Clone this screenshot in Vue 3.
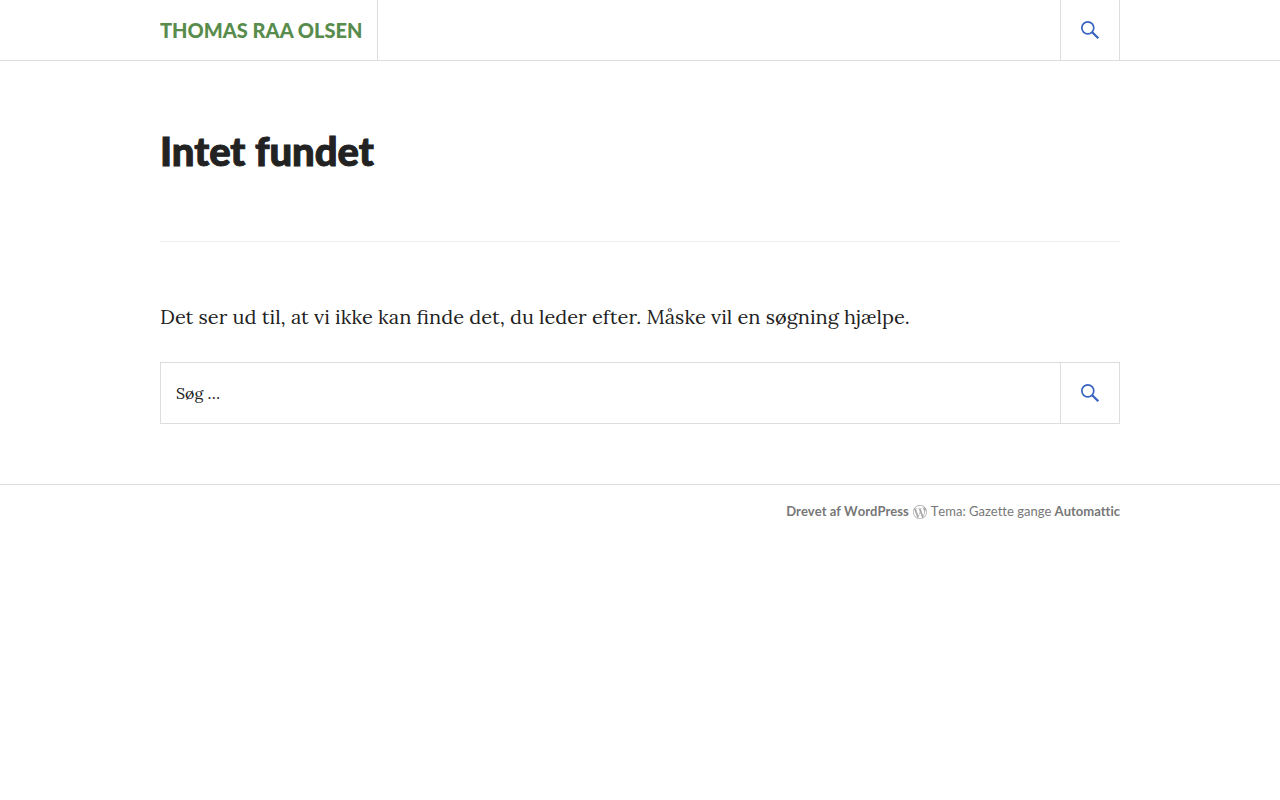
<template>
  <div class="site">
    <header class="site-header">
      <div class="wrapper header-inner">
        <h1 class="site-title"><a href="#">Thomas Raa Olsen</a></h1>
        <button
          type="button"
          class="search-toggle"
          aria-label="Søg"
          @click="focusSearch"
        >
          <svg class="icon-search" viewBox="0 0 20 20" aria-hidden="true">
            <circle cx="7.8" cy="7.8" r="6" />
            <path d="M12 12l6.3 6.3" />
          </svg>
        </button>
      </div>
    </header>

    <main class="wrapper site-content">
      <header class="page-header">
        <h2 class="page-title">Intet fundet</h2>
      </header>
      <div class="page-content">
        <p>
          Det ser ud til, at vi ikke kan finde det, du leder efter. Måske vil en
          søgning hjælpe.
        </p>
        <form class="search-form" role="search" @submit.prevent>
          <input
            ref="searchField"
            v-model="query"
            type="search"
            class="search-field"
            placeholder="Søg …"
            aria-label="Søg efter:"
          />
          <button type="submit" class="search-submit" aria-label="Søg">
            <svg class="icon-search" viewBox="0 0 20 20" aria-hidden="true">
              <circle cx="7.8" cy="7.8" r="6" />
              <path d="M12 12l6.3 6.3" />
            </svg>
          </button>
        </form>
      </div>
    </main>

    <footer class="site-footer">
      <div class="wrapper site-info">
        <a href="#">Drevet af WordPress</a>
        <svg class="icon-wordpress" viewBox="0 0 24 24" aria-hidden="true">
          <path
            d="M21.469 6.825c.84 1.537 1.318 3.3 1.318 5.175 0 3.979-2.156 7.456-5.363 9.325l3.295-9.527c.615-1.54.82-2.771.82-3.864 0-.405-.026-.78-.07-1.11m-7.981.105c.647-.03 1.232-.105 1.232-.105.582-.075.514-.93-.067-.899 0 0-1.755.135-2.88.135-1.064 0-2.85-.15-2.85-.15-.585-.03-.661.855-.075.885 0 0 .54.061 1.125.09l1.68 4.605-2.37 7.08L5.354 6.9c.649-.03 1.234-.1 1.234-.1.585-.075.516-.93-.065-.896 0 0-1.746.138-2.874.138-.2 0-.438-.008-.69-.015C4.911 3.15 8.235 1.215 12 1.215c2.809 0 5.365 1.072 7.286 2.833-.046-.003-.091-.009-.141-.009-1.06 0-1.812.923-1.812 1.914 0 .89.513 1.643 1.06 2.531.411.72.89 1.643.89 2.977 0 .915-.354 1.994-.821 3.479l-1.075 3.585-3.9-11.61.001.014zM12 22.784c-1.059 0-2.081-.153-3.048-.437l3.237-9.406 3.315 9.087c.024.053.05.101.078.149-1.12.393-2.325.609-3.582.609M1.211 12c0-1.564.336-3.05.935-4.39L7.29 21.709C3.694 19.96 1.212 16.271 1.211 12M12 0C5.385 0 0 5.385 0 12s5.385 12 12 12 12-5.385 12-12S18.615 0 12 0"
          />
        </svg>
        <span>Tema: Gazette gange <a href="#">Automattic</a></span>
      </div>
    </footer>
  </div>
</template>

<script setup>
import { ref } from "vue";

const query = ref("");
const searchField = ref(null);

const focusSearch = () => searchField.value.focus();
</script>

<style>
body {
  background: #fff;
}
</style>

<style scoped>
.site {
  color: #222;
  font-family: Lora, "Liberation Serif", serif;
}
.wrapper {
  box-sizing: border-box;
  max-width: 960px;
  margin: 0 auto;
}
.site-header {
  border-bottom: 1px solid #ddd;
}
.header-inner {
  display: flex;
  justify-content: space-between;
}
.site-title {
  margin: 0;
  padding-right: 15px;
  border-right: 1px solid #ddd;
  font-family: Lato, sans-serif;
  font-size: 20px;
  font-weight: 900;
  line-height: 60px;
  text-transform: uppercase;
}
.site-title a {
  color: #588c4c;
  text-decoration: none;
}
.search-toggle,
.search-submit {
  display: flex;
  align-items: center;
  justify-content: center;
  box-sizing: border-box;
  width: 60px;
  height: 60px;
  padding: 0;
  border: solid #ddd;
  border-width: 0 1px;
  background: transparent;
  cursor: pointer;
}
.icon-search {
  width: 20px;
  height: 20px;
  fill: none;
  stroke: #3863c0;
  stroke-width: 1.7;
}
.icon-search path {
  stroke-width: 2.3;
}
.page-header {
  padding: 60px 0;
  border-bottom: 1px solid #eee;
}
.page-title {
  margin: 0;
  font-family: Lato, sans-serif;
  font-size: 40px;
  font-weight: 900;
  line-height: 60px;
  -webkit-text-stroke: 1px #222;
}
.page-content {
  padding: 60px 0;
}
.page-content p {
  margin: 0 0 30px;
  font-size: 20px;
  line-height: 30px;
}
.search-form {
  display: flex;
  border: 1px solid #ddd;
}
.search-field {
  flex: 1;
  min-width: 0;
  padding: 0 15px;
  border: 0;
  outline: 0;
  background: transparent;
  color: #222;
  font-family: inherit;
  font-size: 16px;
  appearance: none;
}
.search-field::placeholder {
  color: #222;
  opacity: 1;
}
.search-submit {
  width: 59px;
  border-right: 0;
}
.site-footer {
  border-top: 1px solid #ddd;
}
.site-info {
  display: flex;
  align-items: center;
  justify-content: flex-end;
  gap: 4px;
  padding: 15px 0;
  color: #777;
  font-family: Lato, sans-serif;
  font-size: 13px;
  font-kerning: none;
  font-variant-ligatures: none;
  line-height: 23px;
}
.site-info a {
  color: #777;
  font-weight: 700;
  text-decoration: none;
}
.icon-wordpress {
  width: 14px;
  height: 14px;
  fill: #aaa;
}
</style>
